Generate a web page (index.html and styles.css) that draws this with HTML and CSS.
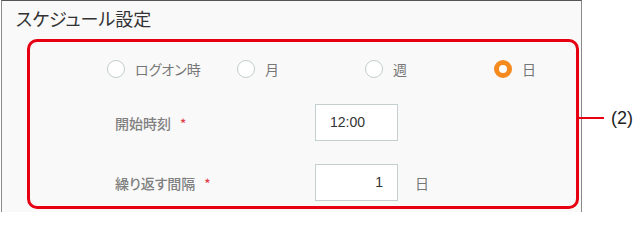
FILE: index.html
```html
<!DOCTYPE html>
<html lang="ja">
<head>
<meta charset="utf-8">
<link rel="stylesheet" href="styles.css">
</head>
<body>
<div class="page">
  <div class="panel">
    <div class="title">スケジュール設定</div>
    <div class="frame">
      <div class="radios">
        <div class="radio"><span class="circle"></span><span class="rlabel">ログオン時</span></div>
        <div class="radio"><span class="circle"></span><span class="rlabel">月</span></div>
        <div class="radio"><span class="circle"></span><span class="rlabel">週</span></div>
        <div class="radio"><span class="circle on"></span><span class="rlabel">日</span></div>
      </div>
      <div class="row first">
        <div class="label">開始時刻<span class="req">*</span></div>
        <div class="input">12:00</div>
      </div>
      <div class="row">
        <div class="label">繰り返す間隔<span class="req">*</span></div>
        <div class="input right">1</div>
        <div class="unit">日</div>
      </div>
    </div>
  </div>
  <div class="callout"><span class="line"></span><span class="num">(2)</span></div>
</div>
</body>
</html>
```
FILE: styles.css
```css
html, body {
  margin: 0;
  padding: 0;
  background: #ffffff;
}
body {
  font-family: "Noto Sans CJK JP", "Noto Sans", sans-serif;
  font-feature-settings: "palt";
}
.page {
  position: relative;
  width: 642px;
  height: 212px;
  overflow: hidden;
}
.panel {
  margin-left: 1px;
  width: 581px;
  height: 230px;
  box-sizing: border-box;
  border: 1px solid #8a8a8a;
  border-top-color: #555;
  background: #f9f9f9;
}
.title {
  padding: 4px 0 0 14px;
  height: 38px;
  box-sizing: border-box;
  font-size: 18px;
  line-height: 26px;
  color: #333;
}
.frame {
  margin-left: 25px;
  width: 552px;
  height: 170px;
  box-sizing: border-box;
  border: 3px solid #e60012;
  border-radius: 10px;
  padding: 18px 0 0 77px;
}
.radios {
  display: grid;
  grid-template-columns: 130px 128px 129px 80px;
  height: 18px;
}
.radio {
  display: flex;
  align-items: center;
  gap: 10px;
}
.circle {
  width: 18px;
  height: 18px;
  box-sizing: border-box;
  border: 1.5px solid #c2cccc;
  border-radius: 50%;
  background: #fff;
}
.circle.on {
  border: 5px solid #f58a1f;
}
.rlabel {
  font-size: 14px;
  color: #777;
  line-height: 18px;
}
.row {
  display: flex;
  align-items: center;
  margin-top: 23px;
  padding-left: 8px;
}
.row.first {
  margin-top: 26px;
}
.label {
  width: 200px;
  font-size: 14px;
  font-weight: 500;
  color: #808080;
}
.req {
  color: #e0404a;
  font-size: 13px;
  margin-left: 9px;
}
.input {
  width: 83px;
  height: 37px;
  box-sizing: border-box;
  border: 1px solid #c4cfcf;
  background: #fff;
  font-family: "Liberation Sans", Arial, sans-serif;
  font-size: 14px;
  color: #333;
  line-height: 35px;
  padding: 0 14px;
}
.input.right {
  text-align: right;
}
.unit {
  margin-left: 17px;
  font-size: 14px;
  color: #777;
}
.callout {
  position: absolute;
  left: 578px;
  top: 106px;
  display: flex;
  align-items: center;
  gap: 7px;
  height: 24px;
}
.line {
  width: 26px;
  height: 2px;
  background: #e60012;
}
.num {
  font-family: "Liberation Sans", Arial, sans-serif;
  font-size: 18px;
  color: #222;
}
```
